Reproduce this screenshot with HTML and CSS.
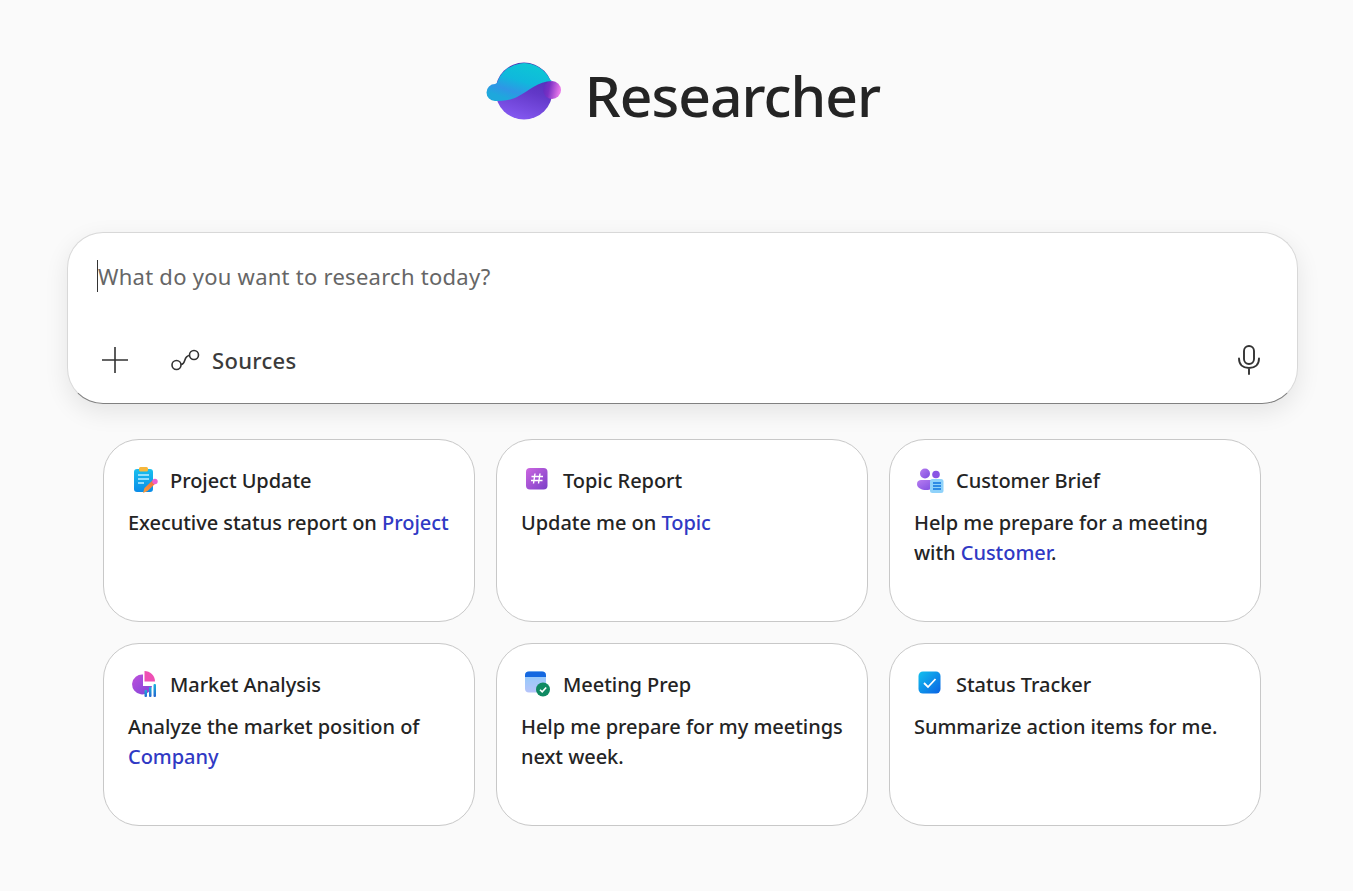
FILE: index.html
```html
<!DOCTYPE html>
<html>
<head>
  <title>Researcher</title>
  <meta charset="utf-8">
  <link rel="stylesheet" href="styles.css">
</head>
<body>
  <div class="page">
    <header class="brand">
      <svg class="brand-logo" width="76" height="60" viewBox="0 0 76 60">
        <defs>
          <linearGradient id="lgTop" x1="0.75" y1="0" x2="0.25" y2="0.9">
            <stop offset="0" stop-color="#0cc8d4"/>
            <stop offset="0.5" stop-color="#10b8dc"/>
            <stop offset="0.8" stop-color="#2f96e6"/>
            <stop offset="1" stop-color="#1ea8dc"/>
          </linearGradient>
          <linearGradient id="lgBottom" x1="0.7" y1="0" x2="0.4" y2="1">
            <stop offset="0" stop-color="#4a2cae"/>
            <stop offset="0.5" stop-color="#6238c8"/>
            <stop offset="1" stop-color="#8458f0"/>
          </linearGradient>
          <linearGradient id="lgTip" x1="0" y1="0" x2="1" y2="0.2">
            <stop offset="0" stop-color="#5a2cc0"/>
            <stop offset="0.4" stop-color="#7a30c4"/>
            <stop offset="1" stop-color="#e878ea"/>
          </linearGradient>
        </defs>
        <circle cx="38" cy="30" r="28.500" fill="url(#lgBottom)"/>
        <circle cx="66" cy="29" r="9" fill="url(#lgTip)"/>
        <path d="M11 22A28.500 28.500 0 0 1 62 15C63 17 64 19 66 20C52 20 43 30 31 36C24 39.500 16 40 9 40A8.500 8.500 0 0 1 9 23Z" fill="url(#lgTop)"/>
      </svg>
      <h1 class="brand-title">Researcher</h1>
    </header>

    <section class="composer">
      <div class="prompt"><span class="caret"></span>What do you want to research today?</div>
      <div class="composer-tools">
        <svg class="tool-plus" width="28" height="28" viewBox="0 0 28 28">
          <path d="M14 1v26M1 14h26" stroke="#333" stroke-width="1.600" fill="none"/>
        </svg>
        <div class="sources">
          <svg width="30" height="24" viewBox="0 0 30 24">
            <circle cx="6.500" cy="17" r="4.500" fill="none" stroke="#333" stroke-width="1.600"/>
            <circle cx="24" cy="7" r="4.500" fill="none" stroke="#333" stroke-width="1.600"/>
            <path d="M11 16.500C16.500 16 13 8 19.500 7.500" fill="none" stroke="#333" stroke-width="1.600"/>
          </svg>
          <span>Sources</span>
        </div>
        <svg class="tool-mic" width="24" height="30" viewBox="0 0 24 30">
          <rect x="7" y="1" width="10" height="18" rx="5" fill="none" stroke="#333" stroke-width="1.900"/>
          <path d="M2 13.500C2 19.500 6 23 12 23C18 23 22 19.500 22 13.500M12 23v6" fill="none" stroke="#333" stroke-width="1.900" stroke-linecap="round"/>
        </svg>
      </div>
    </section>

    <section class="cards">
      <article class="card">
        <div class="card-head">
          <svg width="26" height="26" viewBox="0 0 26 26">
            <defs>
              <linearGradient id="clip" x1="0" y1="0" x2="0" y2="1"><stop offset="0" stop-color="#19c0ee"/><stop offset="1" stop-color="#0a8ce8"/></linearGradient>
              <linearGradient id="pen" x1="0" y1="1" x2="1" y2="0"><stop offset="0" stop-color="#f7a03c"/><stop offset="1" stop-color="#f0683c"/></linearGradient>
            </defs>
            <rect x="2" y="2" width="19" height="23" rx="3" fill="url(#clip)"/>
            <rect x="7" y="0" width="9" height="4.500" rx="1.500" fill="#f6b73c"/>
            <path d="M6 8h11M6 12h11M6 16h6" stroke="#bdeeff" stroke-width="1.400"/>
            <path d="M11 26l1.500-5L21 13l3 3-8.500 8z" fill="url(#pen)"/>
            <circle cx="23" cy="14.500" r="2.700" fill="#ee5fd0"/>
          </svg>
          <h2>Project Update</h2>
        </div>
        <p>Executive status report on <a>Project</a></p>
      </article>

      <article class="card">
        <div class="card-head">
          <svg width="26" height="26" viewBox="0 0 26 26">
            <defs>
              <linearGradient id="hash" x1="0" y1="0" x2="1" y2="1"><stop offset="0" stop-color="#cc66e0"/><stop offset="1" stop-color="#7a3fc8"/></linearGradient>
            </defs>
            <rect x="1" y="1" width="21.500" height="21.500" rx="4" fill="url(#hash)"/>
            <path d="M10 6.500l-1.500 10M15 6.500l-1.500 10M6.500 9.500h11.500M6 13.500h11.500" stroke="#fff" stroke-width="1.400" fill="none"/>
          </svg>
          <h2>Topic Report</h2>
        </div>
        <p>Update me on <a>Topic</a></p>
      </article>

      <article class="card">
        <div class="card-head">
          <svg class="icon-wide" width="30" height="26" viewBox="0 0 30 26">
            <defs>
              <linearGradient id="folk" x1="0" y1="0" x2="1" y2="1"><stop offset="0" stop-color="#b77cf0"/><stop offset="1" stop-color="#7c4ce0"/></linearGradient>
            </defs>
            <circle cx="9" cy="6.500" r="5" fill="url(#folk)"/>
            <circle cx="20" cy="7.500" r="3.800" fill="#8a55e4"/>
            <path d="M1 17c0-3 2-4 4-4h10c3 0 4 2 4 4 0 4-5 6-9 6s-9-2-9-6z" fill="url(#folk)"/>
            <rect x="14" y="12" width="13.500" height="14" rx="2.500" fill="#8fd2fa"/>
            <path d="M17 16h8M17 19h8M17 22h8" stroke="#0f74de" stroke-width="1.500"/>
          </svg>
          <h2>Customer Brief</h2>
        </div>
        <p>Help me prepare for a meeting with <a>Customer</a>.</p>
      </article>

      <article class="card">
        <div class="card-head">
          <svg width="26" height="26" viewBox="0 0 26 26">
            <defs>
              <linearGradient id="pie" x1="0" y1="0" x2="1" y2="1"><stop offset="0" stop-color="#c050dc"/><stop offset="1" stop-color="#7a45d8"/></linearGradient>
              <linearGradient id="bar" x1="0" y1="0" x2="0" y2="1"><stop offset="0" stop-color="#1ab4dc"/><stop offset="1" stop-color="#2464d0"/></linearGradient>
            </defs>
            <path d="M11 3.500A10 10 0 1 0 20 15H11Z" fill="url(#pie)"/>
            <path d="M12.500 0C18 0 23 4.500 23 10.500H12.500Z" fill="#ee4fb4"/>
            <rect x="12.500" y="19" width="2.500" height="7" rx="1" fill="url(#bar)"/>
            <rect x="17" y="16" width="2.500" height="10" rx="1" fill="url(#bar)"/>
            <rect x="21.500" y="13" width="2.500" height="13" rx="1" fill="url(#bar)"/>
          </svg>
          <h2>Market Analysis</h2>
        </div>
        <p>Analyze the market position of <a>Company</a></p>
      </article>

      <article class="card">
        <div class="card-head">
          <svg width="26" height="26" viewBox="0 0 26 26">
            <defs>
              <linearGradient id="cal" x1="0" y1="0" x2="0" y2="1"><stop offset="0" stop-color="#8ccbfa"/><stop offset="1" stop-color="#b6c4fa"/></linearGradient>
            </defs>
            <rect x="0" y="0.500" width="21" height="21" rx="4" fill="url(#cal)"/>
            <path d="M0 6V4.500a4 4 0 0 1 4-4h13a4 4 0 0 1 4 4V6Z" fill="#1568e0"/>
            <circle cx="18" cy="18.500" r="7" fill="#0f8a62"/>
            <path d="M15 18.700l2.200 2.200 4-4.400" stroke="#fff" stroke-width="1.600" fill="none"/>
          </svg>
          <h2>Meeting Prep</h2>
        </div>
        <p>Help me prepare for my meetings next week.</p>
      </article>

      <article class="card">
        <div class="card-head">
          <svg width="26" height="26" viewBox="0 0 26 26">
            <defs>
              <linearGradient id="chk" x1="0" y1="0" x2="1" y2="1"><stop offset="0" stop-color="#12c0ee"/><stop offset="1" stop-color="#0a62e4"/></linearGradient>
            </defs>
            <rect x="0.500" y="0.500" width="22" height="22" rx="4.500" fill="url(#chk)"/>
            <path d="M6 12l4 4 7.500-8" stroke="#fff" stroke-width="1.800" fill="none"/>
          </svg>
          <h2>Status Tracker</h2>
        </div>
        <p>Summarize action items for me.</p>
      </article>
    </section>
  </div>
</body>
</html>
```

FILE: styles.css
```css
* {
  box-sizing: border-box;
}
html, body {
  margin: 0;
  height: 100%;
}
body {
  background-color: #fafafa;
  color: #242424;
  font-family: "Noto Sans", "Open Sans", sans-serif;
}
.page {
  width: 1231px;
  margin-left: 67px;
  padding-top: 60px;
}

/* header */
.brand {
  display: flex;
  justify-content: center;
  align-items: center;
  gap: 24px;
  height: 62px;
  padding-left: 1px;
}
.brand-logo {
  flex: none;
}
.brand-title {
  margin: 0;
  padding-top: 8px;
  font-size: 57px;
  font-weight: 500;
  letter-spacing: -1px;
  line-height: 62px;
  margin-left: -1px;
}

/* prompt box */
.composer {
  height: 172px;
  margin-top: 110px;
  padding: 28px 36px 0 29px;
  background-color: #fff;
  border: 1px solid #d8d8d8;
  border-bottom-color: #808080;
  border-radius: 36px;
  box-shadow: 0 8px 24px rgba(0, 0, 0, 0.09);
}
.prompt {
  display: flex;
  align-items: center;
  height: 30px;
  font-size: 22px;
  color: #666;
  letter-spacing: 0.26px;
}
.caret {
  width: 1px;
  height: 32px;
  background-color: #333;
}
.composer-tools {
  display: flex;
  align-items: center;
  margin-top: 53px;
  height: 32px;
}
.tool-plus {
  margin-left: 4px;
}
.sources {
  display: flex;
  align-items: center;
  gap: 12px;
  margin-left: 41px;
  font-size: 22px;
  font-weight: 500;
  letter-spacing: 0.3px;
  color: #3b3b3b;
}
.tool-mic {
  margin-left: auto;
}

/* prompt starter cards */
.cards {
  display: grid;
  grid-template-columns: repeat(3, 372px);
  grid-auto-rows: 183px;
  gap: 21px;
  margin: 35px 0 0 36px;
}
.card {
  padding: 25px 24px 0 24px;
  background-color: #fff;
  border: 1px solid #c8c8c8;
  border-radius: 36px;
}
.card-head {
  display: flex;
  align-items: center;
  height: 30px;
}
.card-head svg {
  flex: none;
  margin-left: 4px;
}
.card-head .icon-wide {
  margin-left: 2px;
  margin-right: -2px;
}
.card-head h2 {
  margin: 0 0 0 12px;
  font-size: 20px;
  font-weight: 500;
  letter-spacing: -0.05px;
}
.card p {
  margin: 13px 0 0 0;
  font-size: 20px;
  font-weight: 500;
  line-height: 30px;
  letter-spacing: -0.04px;
}
.card a {
  color: #3039c4;
}
```
